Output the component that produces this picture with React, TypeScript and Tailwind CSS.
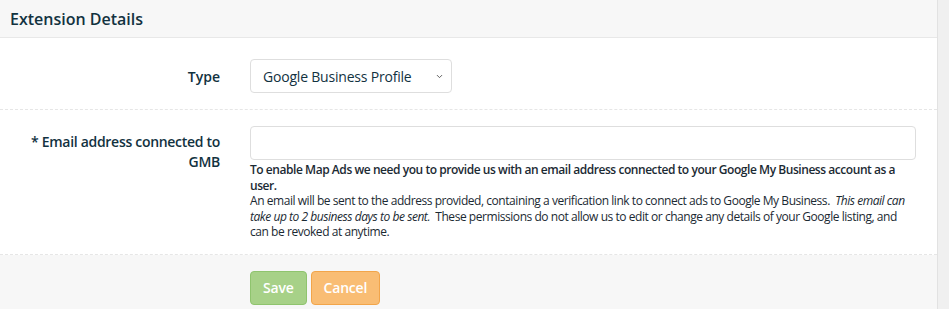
import { ChevronDown } from 'lucide-react';

export default function App() {
  return (
    <div className="flex h-[309px] w-[949px] overflow-hidden bg-white font-['Open_Sans',sans-serif] text-[#12323f]">
      <div className="flex w-[937px] flex-col">
        {/* Header */}
        <div className="flex h-[38px] items-center border-b border-[#e8e8e8] bg-[#f7f7f7] px-[10px]">
          <h2 className="text-[16px] font-semibold text-[#12323f]">Extension Details</h2>
        </div>

        {/* Type */}
        <div className="flex items-center border-b border-dashed border-[#e6e6e6] pt-[21px] pb-[16px]">
          <label className="w-[220px] text-right text-[14px] font-semibold">Type</label>
          <div className="ml-[30px] relative w-[202px]">
            <select className="h-[34px] w-full appearance-none rounded-[4px] border border-[#dedede] bg-white pl-[12px] text-[14px] tracking-[-0.2px] text-[#12323f] outline-none">
              <option>Google Business Profile</option>
            </select>
            <ChevronDown className="pointer-events-none absolute right-[8px] top-[13px] h-[9px] w-[9px] text-[#555]" strokeWidth={2.5} />
          </div>
        </div>

        {/* Email */}
        <div className="flex items-start border-b border-dashed border-[#e6e6e6] pt-[16px] pb-[14px]">
          <label className="w-[220px] pl-[30px] pt-[6px] text-right text-[14px] leading-[20px] font-semibold tracking-[-0.3px]">
            * Email address connected to GMB
          </label>
          <div className="ml-[30px] mr-[21px] flex-1">
            <input className="h-[34px] w-full rounded-[4px] border border-[#dedede] bg-white px-[12px] text-[14px] outline-none" />
            <div className="mt-[2px] text-[12px] leading-[15.6px] tracking-[-0.45px] text-[#1b2a33]">
              <p className="font-semibold">
                To enable Map Ads we need you to provide us with an email address connected to your Google My Business account as a user.
              </p>
              <p>
                An email will be sent to the address provided, containing a verification link to connect ads to Google My Business.&nbsp;{' '}
                <em>This email can take up to 2 business days to be sent.</em>&nbsp; These permissions do not allow us to edit or change any details of your Google listing, and can be revoked at anytime.
              </p>
            </div>
          </div>
        </div>

        {/* Footer */}
        <div className="flex flex-1 gap-[4px] bg-[#f7f7f7] pt-[16px] pl-[250px]">
          <button className="h-[34px] rounded-[4px] border border-[#8fc46e] bg-[#a7d188] px-[12px] text-[14px] font-semibold tracking-[-0.2px] text-white">
            Save
          </button>
          <button className="h-[34px] rounded-[4px] border border-[#f2a54a] bg-[#f9bd74] px-[12px] text-[14px] font-semibold tracking-[-0.2px] text-white">
            Cancel
          </button>
        </div>
      </div>
      <div className="w-[12px] border-l border-[#e2e2e2] bg-[#f0f0f0]" />
    </div>
  );
}
